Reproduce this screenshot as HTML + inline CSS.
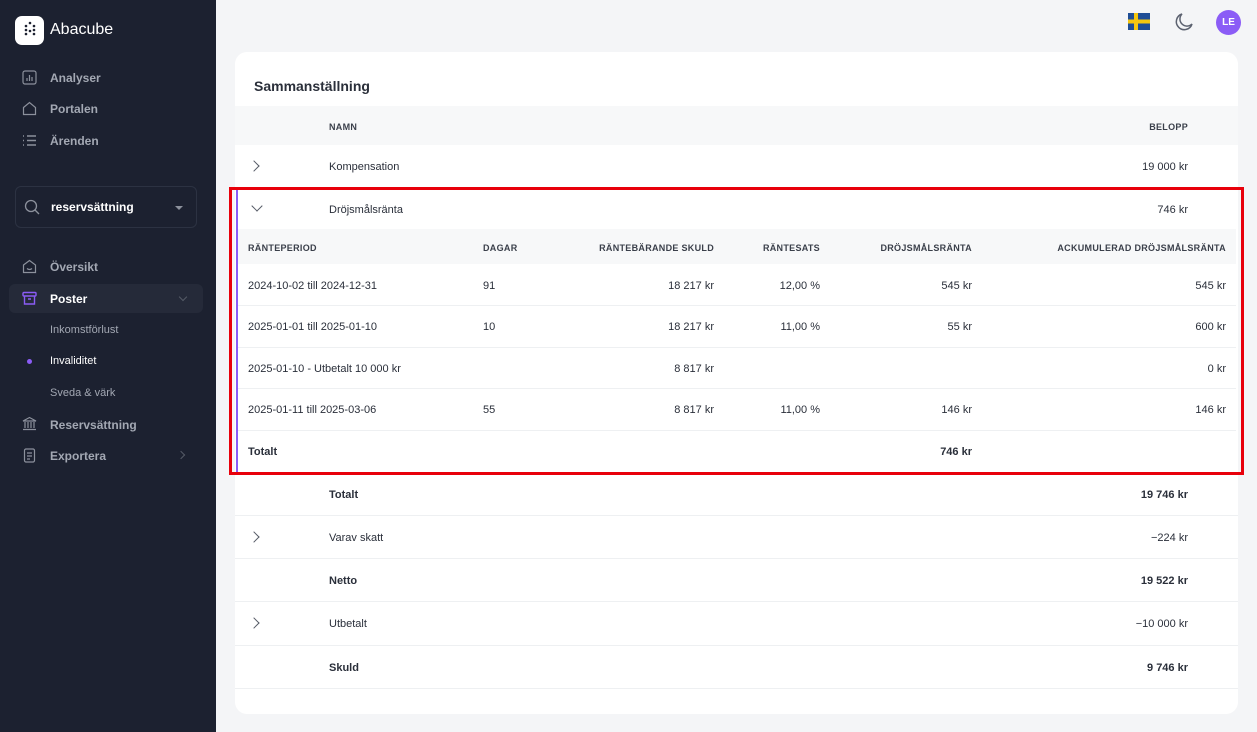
<!DOCTYPE html>
<html><head><meta charset="utf-8"><style>
*{box-sizing:border-box;margin:0;padding:0}
body{width:1257px;height:732px;overflow:hidden;background:#f4f5f7;font-family:"Liberation Sans",sans-serif;position:relative;color:#1f2430}
.sb{position:absolute;left:0;top:0;width:216px;height:732px;background:#1c2130}
.a{position:absolute}
.nav{position:absolute;left:50px;font-size:12px;font-weight:bold;color:#a3a8b3}
.ic{position:absolute;left:22px;width:15px;height:15px}
.card{position:absolute;left:235px;top:52px;width:1003px;height:662px;background:#fff;border-radius:12px}
.t{position:absolute;font-size:11px;color:#2a2f3a;white-space:nowrap;margin-top:2px}
.r{text-align:right}
.h{font-size:9px;font-weight:bold;color:#3a3f4a;letter-spacing:.3px}
.b{font-weight:bold}
.line{position:absolute;height:1px;background:#eef0f2}
.chev{position:absolute;width:8px;height:8px;border-right:1.5px solid #555b66;border-bottom:1.5px solid #555b66}
</style></head><body>
<div class="sb">
 <div class="a" style="left:15px;top:16px;width:29px;height:29px;background:#fff;border-radius:7px"></div>
 <svg class="a" style="left:15px;top:16px" width="29" height="29"><g fill="#1c2130"><circle cx="11" cy="10" r="1.3"/><circle cx="11" cy="14" r="1.3"/><circle cx="11" cy="18" r="1.3"/><circle cx="15" cy="7" r="1.3"/><circle cx="15" cy="15" r="1.3"/><circle cx="19" cy="10" r="1.3"/><circle cx="19" cy="14" r="1.3"/><circle cx="19" cy="18" r="1.3"/></g></svg>
 <div class="a" style="left:50px;top:21px;font-size:16px;color:#fff">Abacube</div>
 <svg class="ic" style="top:70px" viewBox="0 0 15 15" fill="none" stroke="#8c919c" stroke-width="1.2"><rect x="1" y="1" width="13" height="13" rx="2"/><path d="M5 11V8M7.5 11V5M10 11V7"/></svg>
 <div class="nav" style="top:71px">Analyser</div>
 <svg class="ic" style="top:101px" viewBox="0 0 15 15" fill="none" stroke="#8c919c" stroke-width="1.2"><path d="M1.5 6.5L7.5 1.5 13.5 6.5V13.5H1.5Z"/></svg>
 <div class="nav" style="top:102px">Portalen</div>
 <svg class="ic" style="top:133px" viewBox="0 0 15 15" fill="none" stroke="#8c919c" stroke-width="1.4"><path d="M1 3h1M5 3h9M1 7.5h1M5 7.5h9M1 12h1M5 12h9"/></svg>
 <div class="nav" style="top:134px">Ärenden</div>
 <div class="a" style="left:15px;top:186px;width:182px;height:42px;border:1px solid #2c3242;border-radius:6px"></div>
 <svg class="a" style="left:24px;top:199px" width="17" height="17" fill="none" stroke="#8c919c" stroke-width="1.3"><circle cx="7" cy="7" r="5.5"/><path d="M11 11l4 4"/></svg>
 <div class="a" style="left:51px;top:200px;font-size:12px;font-weight:bold;color:#fff">reservsättning</div>
 <div class="a" style="left:175px;top:206px;border-left:4px solid transparent;border-right:4px solid transparent;border-top:4px solid #8c919c"></div>
 <svg class="ic" style="top:259px" viewBox="0 0 15 15" fill="none" stroke="#8c919c" stroke-width="1.2"><path d="M1.5 6L7.5 1.5 13.5 6V13.5H1.5Z"/><path d="M5 9.5q2.5 2 5 0"/></svg>
 <div class="nav" style="top:260px">Översikt</div>
 <div class="a" style="left:9px;top:284px;width:194px;height:29px;background:#252a39;border-radius:6px"></div>
 <svg class="ic" style="top:291px" viewBox="0 0 15 15" fill="none" stroke="#8b5cf6" stroke-width="1.4"><rect x="1" y="1.5" width="13" height="3.5" rx="1"/><path d="M2.5 5v8h10V5M6 8h3"/></svg>
 <div class="nav" style="top:292px;color:#fff">Poster</div>
 <div class="a" style="left:180px;top:294px;width:6px;height:6px;border-right:1px solid #555b66;border-bottom:1px solid #555b66;transform:rotate(45deg)"></div>
 <div class="nav" style="top:324px;font-size:11px;font-weight:normal;color:#a3a8b3">Inkomstförlust</div>
 <div class="a" style="left:27px;top:359px;width:5px;height:5px;border-radius:50%;background:#8b5cf6"></div>
 <div class="nav" style="top:355px;font-size:11px;font-weight:normal;color:#fff">Invaliditet</div>
 <div class="nav" style="top:387px;font-size:11px;font-weight:normal;color:#a3a8b3">Sveda &amp; värk</div>
 <svg class="ic" style="top:416px" viewBox="0 0 15 15" fill="none" stroke="#8c919c" stroke-width="1.2"><path d="M1 5L7.5 1.5 14 5ZM3 6v6M6 6v6M9 6v6M12 6v6M1 13.5h13"/></svg>
 <div class="nav" style="top:418px">Reservsättning</div>
 <svg class="ic" style="top:448px" viewBox="0 0 15 15" fill="none" stroke="#8c919c" stroke-width="1.2"><rect x="2.5" y="1" width="10" height="13" rx="1.5"/><path d="M5 5h5M5 8h5M5 11h3"/></svg>
 <div class="nav" style="top:449px">Exportera</div>
 <div class="a" style="left:178px;top:452px;width:6px;height:6px;border-right:1px solid #555b66;border-top:1px solid #555b66;transform:rotate(45deg)"></div>
</div>
<svg class="a" style="left:1128px;top:13px" width="22" height="17"><rect width="22" height="17" fill="#1f4e96"/><rect x="6" width="4" height="17" fill="#f4c60f"/><rect y="6.5" width="22" height="4" fill="#f4c60f"/></svg>
<svg class="a" style="left:1174px;top:12px" width="20" height="20" fill="none" stroke="#5c6270" stroke-width="1.5"><path d="M8 2a8 8 0 1 0 10 10A7 7 0 0 1 8 2z"/></svg>
<div class="a" style="left:1216px;top:10px;width:25px;height:25px;border-radius:50%;background:#8b5cf6;color:#fff;font-size:10px;font-weight:bold;text-align:center;line-height:25px">LE</div>
<div class="card"></div>
<div class="t b" style="left:254px;top:76px;font-size:14px">Sammanställning</div>
<div class="a" style="left:235px;top:106px;width:1003px;height:39px;background:#f7f8f9"></div>
<div class="t h" style="left:329px;top:120px">NAMN</div>
<div class="t h r" style="left:1088px;width:100px;top:120px">BELOPP</div>
<div class="chev" style="left:250px;top:162px;transform:rotate(-45deg)"></div>
<div class="t" style="left:329px;top:159px">Kompensation</div>
<div class="t r" style="left:1088px;width:100px;top:159px">19 000 kr</div>
<div class="line" style="left:235px;top:187px;width:1003px"></div>
<div class="a" style="left:236px;top:190px;width:2px;height:282px;background:#8b5cf6"></div>
<div class="chev" style="left:253px;top:202px;transform:rotate(45deg)"></div>
<div class="t" style="left:329px;top:202px">Dröjsmålsränta</div>
<div class="t r" style="left:1088px;width:100px;top:202px">746 kr</div>
<div class="a" style="left:238px;top:229px;width:998px;height:35px;background:#f7f8f9"></div>
<div class="t h" style="left:248px;top:241px">RÄNTEPERIOD</div>
<div class="t h" style="left:483px;top:241px">DAGAR</div>
<div class="t h r" style="left:514px;width:200px;top:241px">RÄNTEBÄRANDE SKULD</div>
<div class="t h r" style="left:720px;width:100px;top:241px">RÄNTESATS</div>
<div class="t h r" style="left:822px;width:150px;top:241px">DRÖJSMÅLSRÄNTA</div>
<div class="t h r" style="left:1000px;width:226px;top:241px">ACKUMULERAD DRÖJSMÅLSRÄNTA</div>

<div class="t" style="left:248px;top:278px">2024-10-02 till 2024-12-31</div><div class="t" style="left:483px;top:278px">91</div>
<div class="t r" style="left:614px;width:100px;top:278px">18 217 kr</div><div class="t r" style="left:720px;width:100px;top:278px">12,00 %</div>
<div class="t r" style="left:872px;width:100px;top:278px">545 kr</div><div class="t r" style="left:1126px;width:100px;top:278px">545 kr</div>
<div class="line" style="left:238px;top:305px;width:998px"></div>
<div class="t" style="left:248px;top:319px">2025-01-01 till 2025-01-10</div><div class="t" style="left:483px;top:319px">10</div>
<div class="t r" style="left:614px;width:100px;top:319px">18 217 kr</div><div class="t r" style="left:720px;width:100px;top:319px">11,00 %</div>
<div class="t r" style="left:872px;width:100px;top:319px">55 kr</div><div class="t r" style="left:1126px;width:100px;top:319px">600 kr</div>
<div class="line" style="left:238px;top:347px;width:998px"></div>
<div class="t" style="left:248px;top:361px">2025-01-10 - Utbetalt 10 000 kr</div>
<div class="t r" style="left:614px;width:100px;top:361px">8 817 kr</div>
<div class="t r" style="left:1126px;width:100px;top:361px">0 kr</div>
<div class="line" style="left:238px;top:388px;width:998px"></div>
<div class="t" style="left:248px;top:402px">2025-01-11 till 2025-03-06</div><div class="t" style="left:483px;top:402px">55</div>
<div class="t r" style="left:614px;width:100px;top:402px">8 817 kr</div><div class="t r" style="left:720px;width:100px;top:402px">11,00 %</div>
<div class="t r" style="left:872px;width:100px;top:402px">146 kr</div><div class="t r" style="left:1126px;width:100px;top:402px">146 kr</div>
<div class="line" style="left:238px;top:430px;width:998px"></div>
<div class="t b" style="left:248px;top:444px">Totalt</div>
<div class="t b r" style="left:872px;width:100px;top:444px">746 kr</div>
<div class="a" style="left:229px;top:187px;width:1015px;height:288px;border:3px solid #e8000b"></div>

<div class="t b" style="left:329px;top:487px">Totalt</div><div class="t b r" style="left:1088px;width:100px;top:487px">19 746 kr</div>
<div class="line" style="left:235px;top:515px;width:1003px"></div>
<div class="chev" style="left:250px;top:533px;transform:rotate(-45deg)"></div>
<div class="t" style="left:329px;top:530px">Varav skatt</div><div class="t r" style="left:1088px;width:100px;top:530px">−224 kr</div>
<div class="line" style="left:235px;top:558px;width:1003px"></div>
<div class="t b" style="left:329px;top:573px">Netto</div><div class="t b r" style="left:1088px;width:100px;top:573px">19 522 kr</div>
<div class="line" style="left:235px;top:601px;width:1003px"></div>
<div class="chev" style="left:250px;top:619px;transform:rotate(-45deg)"></div>
<div class="t" style="left:329px;top:616px">Utbetalt</div><div class="t r" style="left:1088px;width:100px;top:616px">−10 000 kr</div>
<div class="line" style="left:235px;top:645px;width:1003px"></div>
<div class="t b" style="left:329px;top:660px">Skuld</div><div class="t b r" style="left:1088px;width:100px;top:660px">9 746 kr</div>
<div class="line" style="left:235px;top:688px;width:1003px"></div>
</body></html>
